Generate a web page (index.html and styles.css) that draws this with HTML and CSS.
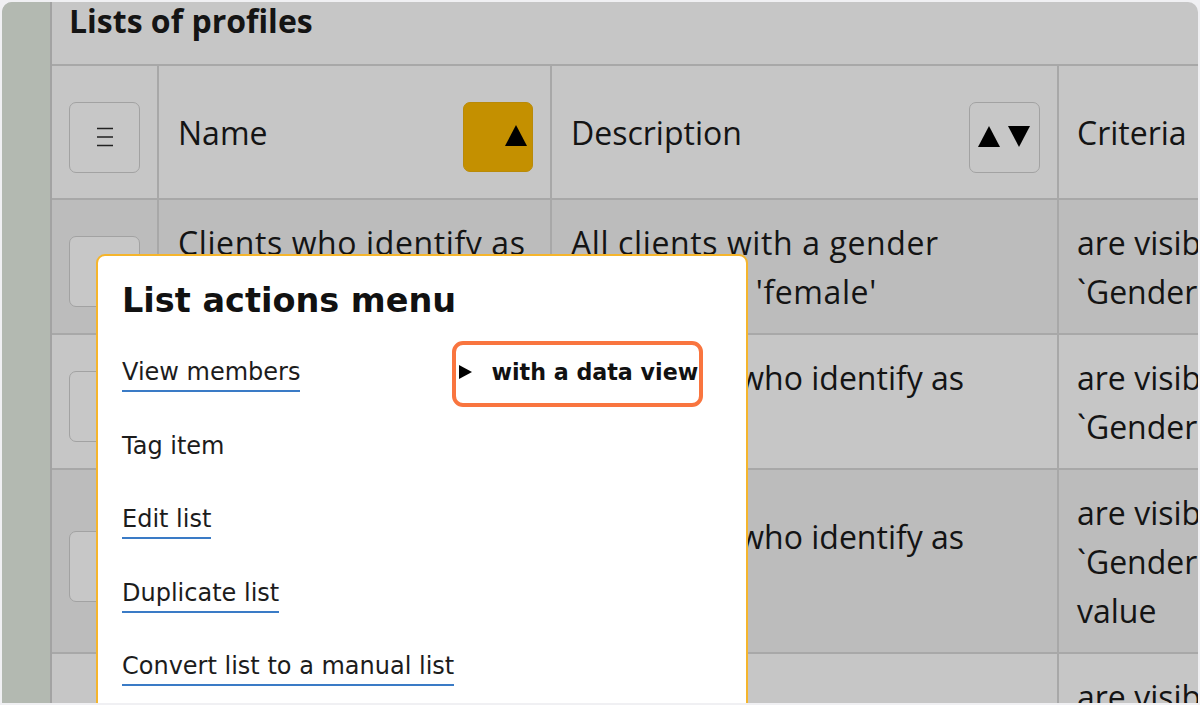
FILE: index.html
```html
<!DOCTYPE html>
<html lang="en">
<head>
<meta charset="utf-8">
<title>Lists of profiles</title>
<link rel="stylesheet" href="styles.css">
</head>
<body>
<div class="frame">
  <aside class="sidebar"></aside>
  <main class="main">
    <h1 class="title">Lists of profiles</h1>
    <div class="table" role="table">
      <div class="row head" role="row">
        <div class="cell c1">
          <button class="icon-btn" aria-label="Column options">
            <svg width="18" height="20" viewBox="0 0 18 20"><path d="M1 1.5h16M1 10h16M1 18.5h16" stroke="#222" stroke-width="1.4" fill="none"/></svg>
          </button>
        </div>
        <div class="cell c2 th">
          <span>Name</span>
          <button class="sort-btn active" aria-label="Sorted ascending">
            <svg width="22" height="21" viewBox="0 0 22 21"><path d="M11 0L22 21H0Z" fill="#000"/></svg>
          </button>
        </div>
        <div class="cell c3 th">
          <span>Description</span>
          <button class="sort-btn both" aria-label="Sort">
            <svg width="22" height="21" viewBox="0 0 22 21"><path d="M11 0L22 21H0Z" fill="#000"/></svg>
            <svg width="22" height="21" viewBox="0 0 22 21"><path d="M0 0H22L11 21Z" fill="#000"/></svg>
          </button>
        </div>
        <div class="cell c4 th"><span>Criteria</span></div>
      </div>

      <div class="row dark" role="row">
        <div class="cell c1"><button class="icon-btn" aria-label="Actions"></button></div>
        <div class="cell c2 wide">Clients who identify as<br>female</div>
        <div class="cell c3 wide">All clients with a gender<br>attribute of 'female'</div>
        <div class="cell c4">are visible where<br>`Gender` is 'female'</div>
      </div>

      <div class="row" role="row">
        <div class="cell c1"><button class="icon-btn" aria-label="Actions"></button></div>
        <div class="cell c2">Clients who identify as<br>male</div>
        <div class="cell c3">Any clients who identify as<br>male</div>
        <div class="cell c4">are visible where<br>`Gender` is 'male'</div>
      </div>

      <div class="row dark" role="row">
        <div class="cell c1"><button class="icon-btn" aria-label="Actions"></button></div>
        <div class="cell c2">Clients who identify as<br>non-binary</div>
        <div class="cell c3">Any clients who identify as<br>non-binary</div>
        <div class="cell c4">are visible where<br>`Gender`<br>value</div>
      </div>

      <div class="row" role="row">
        <div class="cell c1"><button class="icon-btn" aria-label="Actions"></button></div>
        <div class="cell c2">Clients with no<br>gender</div>
        <div class="cell c3">No gender<br>recorded</div>
        <div class="cell c4">are visible where<br>`Gender` has no<br>value</div>
      </div>
    </div>
  </main>

  <div class="popup" role="menu">
    <h2 class="popup-title">List actions menu</h2>
    <ul class="menu">
      <li class="menu-row">
        <a class="menu-link" href="#">View members</a>
        <span class="data-view">
          <svg class="disclosure" width="13" height="14" viewBox="0 0 13 14"><path d="M0 0L13 7L0 14Z" fill="#000"/></svg>
          <b>with a data view</b>
          <span class="highlight"></span>
        </span>
      </li>
      <li class="menu-row"><span class="menu-text">Tag item</span></li>
      <li class="menu-row"><a class="menu-link" href="#">Edit list</a></li>
      <li class="menu-row"><a class="menu-link" href="#">Duplicate list</a></li>
      <li class="menu-row"><a class="menu-link" href="#">Convert list to a manual list</a></li>
    </ul>
  </div>
</div>
</body>
</html>
```

FILE: styles.css
```css
* { box-sizing: border-box; }

html, body {
  margin: 0;
  padding: 0;
  height: 705px;
  overflow: hidden;
  background: #f0f0f3;
}

.frame {
  position: relative;
  display: flex;
  margin: 2px 2px 0 2px;
  height: 701px;
  border-radius: 10px 10px 0 0;
  overflow: hidden;
  background: #c6c6c6;
  font-family: "Open Sans", "Liberation Sans", sans-serif;
  color: #141414;
}

.sidebar {
  flex: 0 0 50px;
  background: #b3b9b1;
  border-right: 2px solid #a3a3a3;
}

.main {
  flex: 1;
  min-width: 0;
  display: flex;
  flex-direction: column;
}

.title {
  flex: none;
  margin: 0;
  height: 64px;
  padding: 0 17px;
  font-size: 32px;
  font-weight: 700;
  line-height: 38px;
  border-bottom: 2px solid #a8a8a8;
}

.table {
  flex: none;
  display: flex;
  flex-direction: column;
}

.row {
  flex: none;
  display: grid;
  grid-template-columns: 107px 393px 507px 1fr;
  border-bottom: 2px solid #a8a8a8;
  background: #c6c6c6;
  font-size: 32px;
  line-height: 49px;
}

.row.dark { background: #bcbcbc; }

.row.head { height: 134px; }

.cell {
  padding: 17.5px 17px 17.5px 19px;
  border-right: 2px solid #a8a8a8;
  display: flex;
  flex-direction: column;
  justify-content: center;
  white-space: pre;
}

.cell.wide { letter-spacing: 0.6px; }

.cell.c1 {
  padding: 0;
  align-items: center;
}

.cell.c4 { border-right: none; padding-left: 18px; }

.cell.th {
  flex-direction: row;
  align-items: center;
  justify-content: space-between;
  padding-top: 0;
  padding-bottom: 0;
}

.icon-btn {
  width: 71px;
  height: 71px;
  margin-top: 10px;
  padding: 0;
  border: 1.5px solid #a2a2a2;
  border-radius: 7px;
  background: #c7c7c7;
  display: flex;
  align-items: center;
  justify-content: center;
}

.sort-btn {
  width: 71px;
  height: 71px;
  margin-top: 10px;
  padding: 0 9px 2px 8px;
  border: 1.5px solid #a2a2a2;
  border-radius: 7px;
  background: #c7c7c7;
  display: flex;
  align-items: center;
  justify-content: space-between;
}

.sort-btn.active {
  width: 70px;
  height: 70px;
  justify-content: flex-end;
  padding: 0 5px 3px 0;
  background: #c49000;
  border-color: #b98a08;
}

/* Popup menu */
.popup {
  position: absolute;
  left: 94px;
  top: 252px;
  width: 652px;
  height: 470px;
  background: #fff;
  border: 2px solid #f5b52c;
  border-radius: 9px;
  padding: 25px 24px 0 24px;
  font-family: "DejaVu Sans", "Verdana", sans-serif;
  color: #1c1c1c;
}

.popup-title {
  margin: 0;
  font-size: 33.5px;
  line-height: 40px;
  font-weight: 700;
  color: #111;
}

.menu {
  list-style: none;
  margin: 36px 0 0 0;
  padding: 0;
  display: flex;
  flex-direction: column;
  gap: 38.5px;
}

.menu-row {
  display: flex;
  align-items: flex-start;
  font-size: 24px;
  line-height: 30px;
}

.menu-link,
.menu-text {
  display: inline-block;
  color: #1c1c1c;
  text-decoration: none;
  padding-bottom: 3px;
  border-bottom: 2px solid #3a7bc6;
}

.menu-text { border-bottom-color: transparent; }

.data-view {
  position: relative;
  margin-left: 159px;
  display: inline-flex;
  align-items: center;
  gap: 19px;
  height: 30px;
}

.data-view b {
  font-size: 22.2px;
  font-weight: 700;
  color: #111;
}

.disclosure { flex: none; }

.highlight {
  position: absolute;
  left: -7px;
  right: -5px;
  top: -16px;
  bottom: -20px;
  border: 4px solid #f9753f;
  border-radius: 11px;
}
```
